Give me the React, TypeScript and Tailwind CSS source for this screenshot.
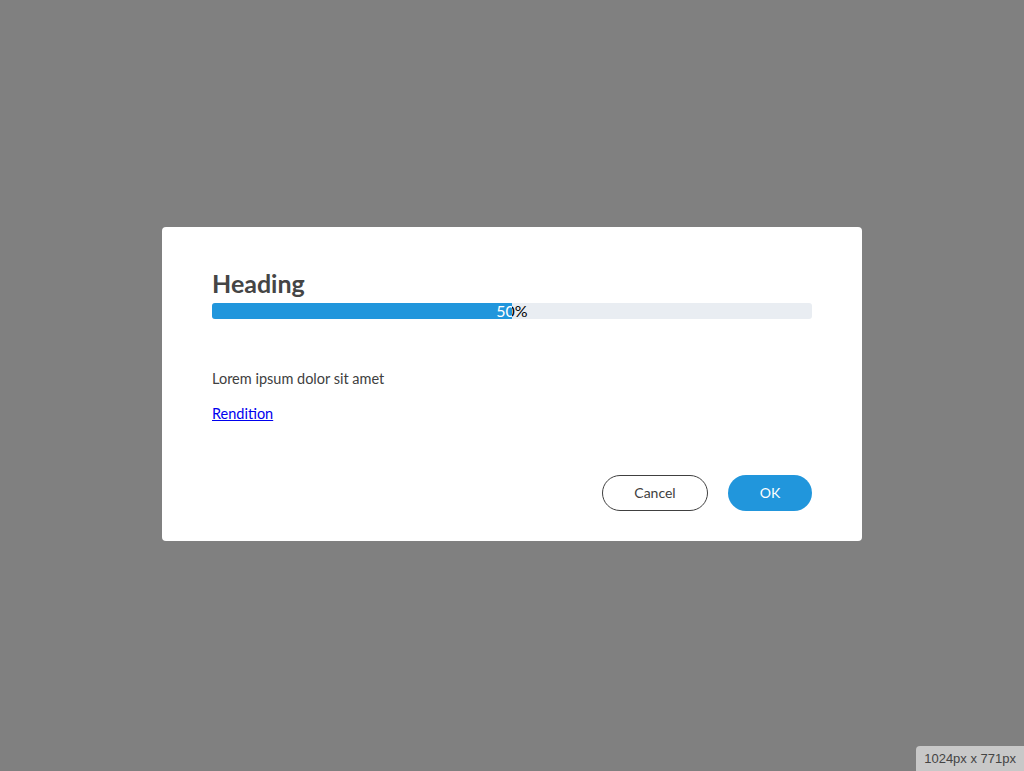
const App = () => {
    return (
        <div className="relative w-full h-[771px] bg-[#808080] flex items-center justify-center pb-[4px] font-['Lato',sans-serif]">
            <div className="w-[700px] h-[314px] bg-white rounded-[4px] px-[50px] pt-[40px] pb-[30px] flex flex-col">
                <h1 className="text-[25px] leading-[32px] font-bold text-[#454545]">Heading</h1>
                <div className="relative mt-[4px] h-[16px] w-full rounded-[3px] bg-[#e9edf2] overflow-hidden">
                    <div className="absolute inset-0 flex items-center justify-center text-[16px] leading-[16px] text-black">50%</div>
                    <div className="absolute left-0 top-0 h-full w-1/2 bg-[#2196dc] overflow-hidden">
                        <div className="w-[600px] h-full flex items-center justify-center text-[16px] leading-[16px] text-white">50%</div>
                    </div>
                </div>
                <p className="mt-[50px] text-[14.5px] leading-[20px] text-[#404040]">Lorem ipsum dolor sit amet</p>
                <a href="#" className="mt-[15px] text-[14.5px] leading-[20px] text-[#0000ee] underline self-start">Rendition</a>
                <div className="mt-auto flex justify-end gap-[20px]">
                    <button className="w-[106px] h-[36px] rounded-full border border-[#404040] text-[14px] text-[#404040] bg-white">Cancel</button>
                    <button className="w-[84px] h-[36px] rounded-full bg-[#2196dc] text-[14px] text-white">OK</button>
                </div>
            </div>
            <div className="absolute right-0 bottom-0 h-[25px] px-[8px] bg-[#c8c8c8] rounded-tl-[4px] flex items-center text-[13px] text-[#444444] font-['Liberation_Sans',sans-serif]">1024px x 771px</div>
        </div>
    )
}

export default App
